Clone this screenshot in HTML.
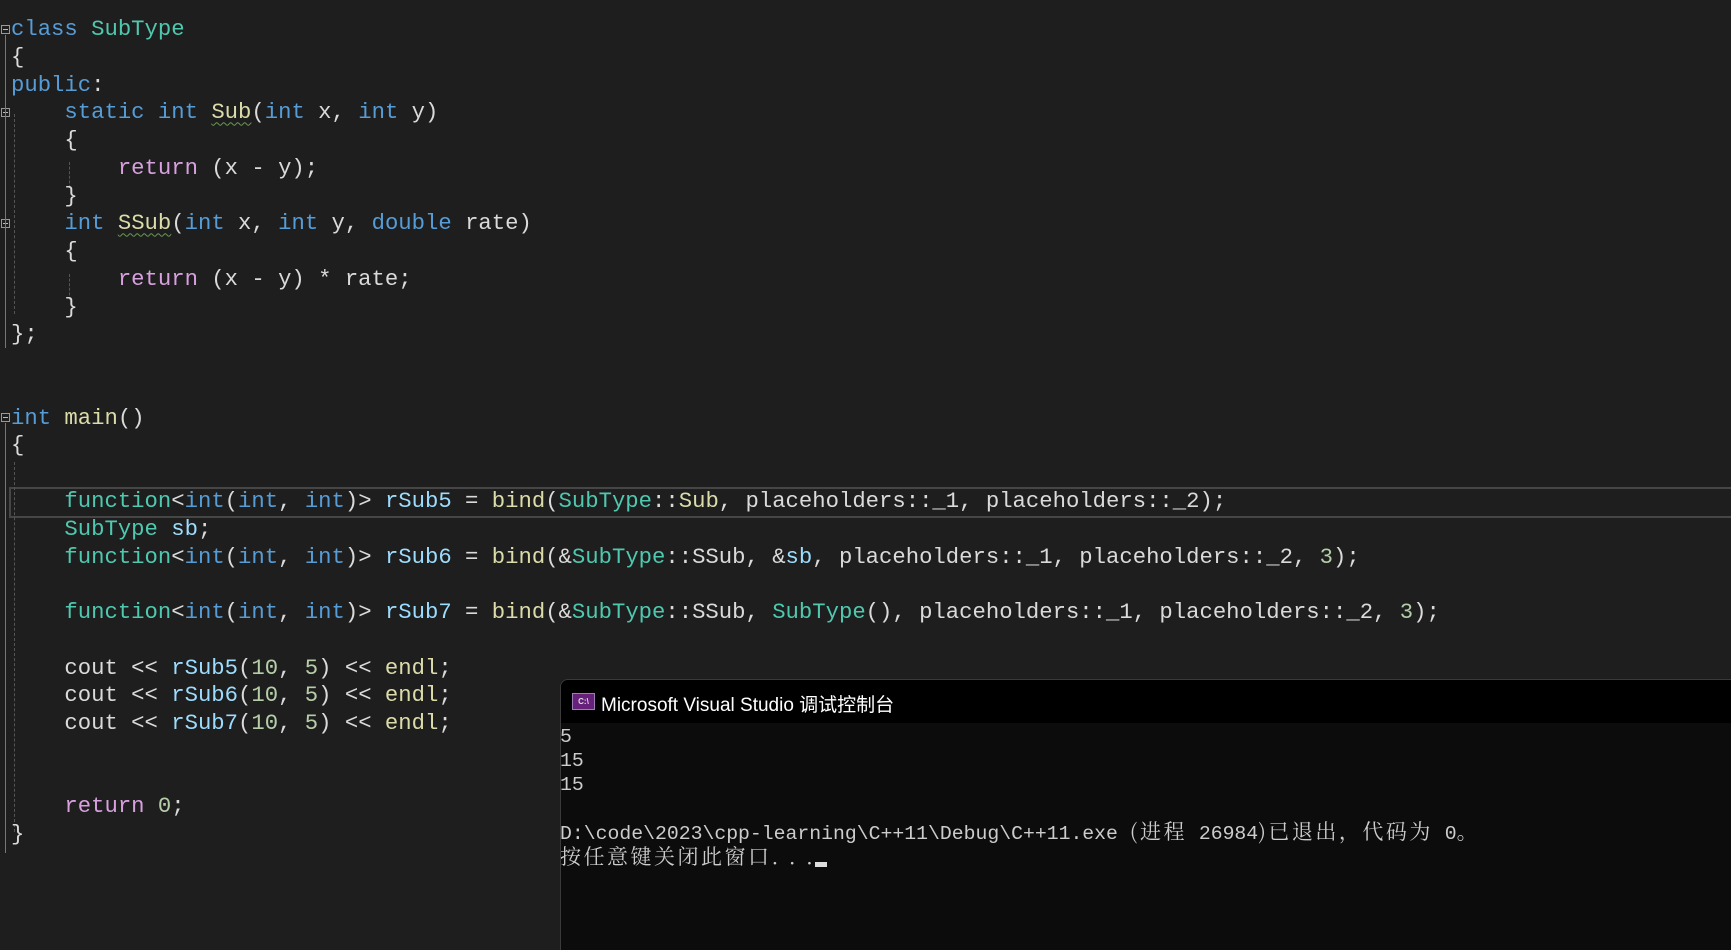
<!DOCTYPE html>
<html><head><meta charset="utf-8"><style>
html,body{margin:0;padding:0;background:#1e1e1e;width:1731px;height:950px;overflow:hidden;position:relative}
pre{position:absolute;left:11px;top:16px;margin:0;font-family:"Liberation Mono",monospace;font-size:22.25px;line-height:27.77px;color:#dadada;white-space:pre}
.k{color:#569cd6}.t{color:#4ec9b0}.f{color:#dcdcaa}.r{color:#d8a0df}.v{color:#9cdcfe}.n{color:#b5cea8}
.sq{text-decoration:underline wavy #6a9955;text-decoration-thickness:1px;text-underline-offset:3px}
.hl{position:absolute;left:9px;right:0;top:487px;height:27px;border:2px solid #464646;border-right:none}
.box{position:absolute;width:7px;height:7px;border:1px solid #999;left:1px;font-size:0}
.box:after{content:"";position:absolute;left:1px;top:3px;width:5px;height:1px;background:#bbb}
.vl{position:absolute;border-left:1px solid #777}
.dl{position:absolute;border-left:1px dashed #555}
.con{position:absolute;left:560px;top:679px;width:1180px;height:280px;background:#0c0c0c;border:1px solid #3a3a3a;border-radius:8px 0 0 0;overflow:hidden}
.tb{height:43px;background:#000;position:relative}
.ic{position:absolute;left:11px;top:13px;width:23px;height:17px;background:#68217a;border:1px solid #9b7fb4;box-sizing:border-box;color:#ddd;font:bold 8px "Liberation Sans",sans-serif;line-height:15px;text-align:center}
.tt{position:absolute;left:40px;top:10px;color:#fff;font-family:"Liberation Sans","Noto Sans CJK SC",sans-serif;font-size:19px}
.out{position:absolute;left:-1px;top:45px;margin:0;font-family:"Liberation Mono","Noto Serif CJK SC",monospace;font-size:19.8px;line-height:24px;color:#cccccc;white-space:pre}
.c{font-family:"Noto Serif CJK SC",serif;font-size:21px;letter-spacing:2.5px;line-height:1}
.cur{display:inline-block;width:12px;height:5px;background:#ddd;vertical-align:-3px}
</style></head><body>
<div class="hl"></div>
<div class="box" style="top:25px"></div>
<div class="box" style="top:108px"></div>
<div class="box" style="top:219px"></div>
<div class="box" style="top:413px"></div>
<div class="vl" style="left:5px;top:35px;height:313px"></div>
<div class="dl" style="left:14px;top:114px;height:200px"></div>
<div class="dl" style="left:69px;top:162px;height:26px"></div>
<div class="dl" style="left:69px;top:274px;height:26px"></div>
<div class="vl" style="left:5px;top:423px;height:430px"></div>
<div class="dl" style="left:14px;top:462px;height:370px"></div>
<pre><span class="k">class</span> <span class="t">SubType</span>
{
<span class="k">public</span>:
    <span class="k">static</span> <span class="k">int</span> <span class="f sq">Sub</span>(<span class="k">int</span> x, <span class="k">int</span> y)
    {
        <span class="r">return</span> (x - y);
    }
    <span class="k">int</span> <span class="f sq">SSub</span>(<span class="k">int</span> x, <span class="k">int</span> y, <span class="k">double</span> rate)
    {
        <span class="r">return</span> (x - y) * rate;
    }
};


<span class="k">int</span> <span class="f">main</span>()
{

    <span class="t">function</span>&lt;<span class="k">int</span>(<span class="k">int</span>, <span class="k">int</span>)&gt; <span class="v">rSub5</span> = <span class="f">bind</span>(<span class="t">SubType</span>::<span class="f">Sub</span>, placeholders::_1, placeholders::_2);
    <span class="t">SubType</span> <span class="v">sb</span>;
    <span class="t">function</span>&lt;<span class="k">int</span>(<span class="k">int</span>, <span class="k">int</span>)&gt; <span class="v">rSub6</span> = <span class="f">bind</span>(&amp;<span class="t">SubType</span>::SSub, &amp;<span class="v">sb</span>, placeholders::_1, placeholders::_2, <span class="n">3</span>);

    <span class="t">function</span>&lt;<span class="k">int</span>(<span class="k">int</span>, <span class="k">int</span>)&gt; <span class="v">rSub7</span> = <span class="f">bind</span>(&amp;<span class="t">SubType</span>::SSub, <span class="t">SubType</span>(), placeholders::_1, placeholders::_2, <span class="n">3</span>);

    cout &lt;&lt; <span class="v">rSub5</span>(<span class="n">10</span>, <span class="n">5</span>) &lt;&lt; <span class="f">endl</span>;
    cout &lt;&lt; <span class="v">rSub6</span>(<span class="n">10</span>, <span class="n">5</span>) &lt;&lt; <span class="f">endl</span>;
    cout &lt;&lt; <span class="v">rSub7</span>(<span class="n">10</span>, <span class="n">5</span>) &lt;&lt; <span class="f">endl</span>;


    <span class="r">return</span> <span class="n">0</span>;
}</pre>
<div class="con">
<div class="tb"><div class="ic">C:\</div><div class="tt">Microsoft Visual Studio 调试控制台</div></div>
<pre class="out">5
15
15

D:\code\2023\cpp-learning\C++11\Debug\C++11.exe <span class="c">(进程</span> 26984<span class="c">)已退出，代码为</span> 0<span class="c">。</span>
<span class="c">按任意键关闭此窗口. . .</span><span class="cur"></span></pre>
</div>
</body></html>
